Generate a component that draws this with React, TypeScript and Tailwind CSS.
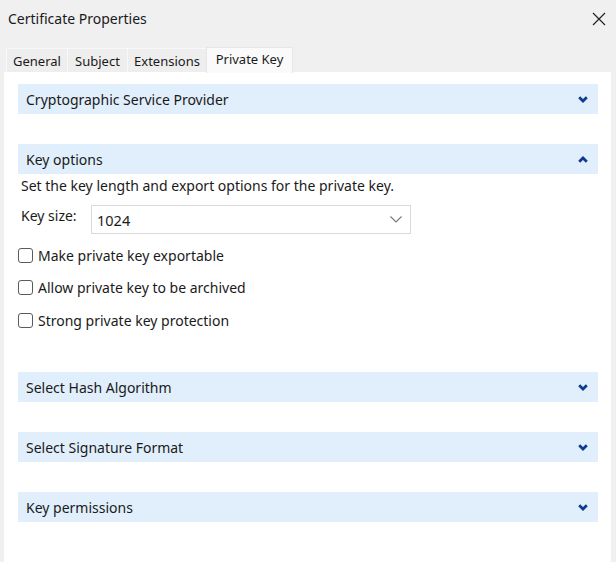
import React, { useState } from "react";

// tab label + width of its button
const tabs: [string, string][] = [
  ["General", "w-[61px]"],
  ["Subject", "w-[60px]"],
  ["Extensions", "w-[79px]"],
  ["Private Key", "w-[87px]"],
];

function Chevron({ up }: { up?: boolean }) {
  return (
    <svg width="10" height="7" viewBox="0 0 10 7" className={up ? "rotate-180" : ""}>
      <path d="M1.2 1.3 L5 5 L8.8 1.3" stroke="#0f3a94" strokeWidth="2.8" fill="none" strokeLinejoin="miter" />
    </svg>
  );
}

function SectionHeader({ title, open, onClick }: { title: string; open?: boolean; onClick?: () => void }) {
  return (
    <div
      onClick={onClick}
      className="h-[30px] bg-[#e1effc] flex items-center justify-between pl-[8px] pr-[10px] cursor-default"
    >
      <span className="text-[14px] text-[#1a1a1a]">{title}</span>
      <Chevron up={open} />
    </div>
  );
}

function Check({ label }: { label: string }) {
  const [on, setOn] = useState(false);
  return (
    <label className="flex items-center h-[20px] gap-[5px]">
      <span
        onClick={() => setOn(!on)}
        className="w-[15px] h-[15px] rounded-[3px] border border-[#5a5a5a] bg-white flex items-center justify-center"
      >
        {on && <span className="text-[10px] leading-none">✓</span>}
      </span>
      <span className="text-[14px] text-[#1a1a1a]">{label}</span>
    </label>
  );
}

export default function App() {
  const [tab, setTab] = useState("Private Key");
  const [keyOpen, setKeyOpen] = useState(true);

  return (
    <div
      className="w-[616px] h-[562px] bg-[#f0f0f0] flex flex-col overflow-hidden text-[#1a1a1a]"
      style={{ fontFamily: '"Noto Sans", "Open Sans", sans-serif' }}
    >
      {/* title bar */}
      <div className="h-[37px] flex items-center justify-between pl-[8px] pr-[10px]">
        <span className="text-[14px]">Certificate Properties</span>
        <svg width="14" height="14" viewBox="0 0 14 14">
          <path d="M1 1 L13 13 M13 1 L1 13" stroke="#222" strokeWidth="1.2" />
        </svg>
      </div>

      {/* tabs */}
      <div className="flex items-end h-[35px] pl-[6px]">
        {tabs.map(([t, w]) => {
          const active = t === tab;
          return (
            <div
              key={t}
              onClick={() => setTab(t)}
              className={
                active
                  ? `${w} h-[26px] bg-[#fafafa] border-t border-x border-[#e6e6e6] flex items-center justify-center pb-[2px] text-[13px] -mb-px z-10`
                  : `${w} h-[24px] bg-[#eeeeee] border-t border-l border-[#f8f8f8] flex items-end justify-center pb-[1px] text-[13px]`
              }
            >
              {t}
            </div>
          );
        })}
      </div>

      {/* panel */}
      <div className="flex-1 ml-[4px] mr-[5px] bg-white pt-[12px] pl-[14px] pr-[13px]">
        <SectionHeader title="Cryptographic Service Provider" />

        <div className="mt-[30px]">
          <SectionHeader title="Key options" open={keyOpen} onClick={() => setKeyOpen(!keyOpen)} />
          {keyOpen && (
            <div>
              <p className="pl-[3px] mt-[2px] text-[14px] leading-[20px]">
                Set the key length and export options for the private key.
              </p>
              <div className="flex items-start mt-[9px] pl-[3px]">
                <span className="text-[14px] w-[70px] leading-[20px] mt-[1px]">Key size:</span>
                <div className="w-[320px] h-[29px] border border-[#dadada] bg-white flex items-center justify-between pl-[5px] pr-[8px]">
                  <span className="text-[14.5px] mt-[2px]">1024</span>
                  <svg width="12" height="7" viewBox="0 0 12 7">
                    <path d="M0.5 0.5 L6 6 L11.5 0.5" stroke="#777" strokeWidth="1.1" fill="none" />
                  </svg>
                </div>
              </div>
              <div className="flex flex-col gap-[12.5px] mt-[11px]">
                <Check label="Make private key exportable" />
                <Check label="Allow private key to be archived" />
                <Check label="Strong private key protection" />
              </div>
            </div>
          )}
        </div>

        <div className="mt-[42px] flex flex-col gap-[30px]">
          <SectionHeader title="Select Hash Algorithm" />
          <SectionHeader title="Select Signature Format" />
          <SectionHeader title="Key permissions" />
        </div>
      </div>
    </div>
  );
}
